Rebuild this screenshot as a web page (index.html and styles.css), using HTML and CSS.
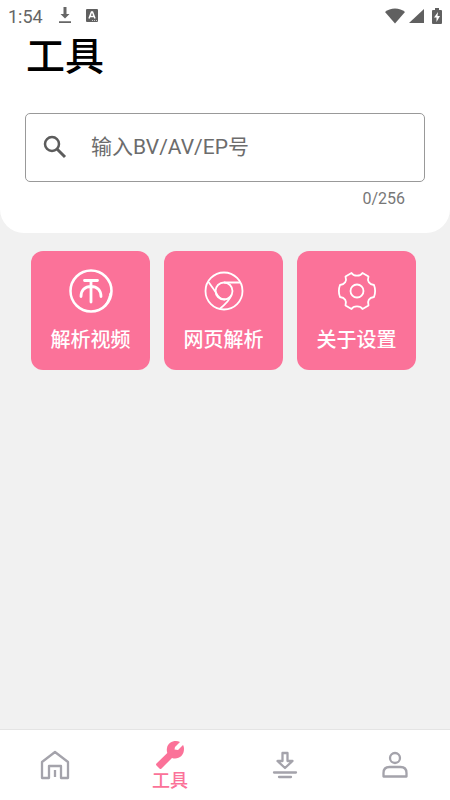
FILE: index.html
```html
<!DOCTYPE html>
<html lang="zh-CN">
<head>
<meta charset="utf-8">
<meta name="viewport" content="width=device-width, initial-scale=1">
<title>工具</title>
<link rel="stylesheet" href="styles.css">
</head>
<body>
<header class="top">
  <div class="status">
    <span class="time">1:54</span>
    <svg class="status-download" width="14" height="18" viewBox="0 0 14 18" aria-hidden="true"><path d="M5.500 0h3v7h3L7 11.500 2.500 7h3zM1 14.300h12v1.700H1z" fill="#666"/></svg>
    <svg class="status-app" width="12" height="14" viewBox="0 0 12 14" aria-hidden="true"><rect width="12" height="13" rx="1" fill="#606060"/><path d="M3 9.500 5.500 3h1L9 9.500M4 7.500h4" fill="none" stroke="#fff" stroke-width="1.500"/><path d="M6 11.500h5" stroke="#ccc" stroke-dasharray="1 1"/></svg>
    <span class="spacer"></span>
    <svg width="20" height="16" viewBox="0 0 20 16" aria-hidden="true"><path d="M0 4C5-.7 15-.7 20 4L10 15.500z" fill="#606060"/></svg>
    <svg width="15" height="15" viewBox="0 0 15 15" aria-hidden="true"><path d="M15 0v14H0z" fill="#606060"/></svg>
    <svg class="battery" width="10" height="17" viewBox="0 0 10 17" aria-hidden="true"><path d="M3 0h4v2h2q1 0 1 1v12q0 1-1 1H1q-1 0-1-1V3q0-1 1-1h2z" fill="#606060"/><path d="M6 4 2 9.500h2.500V14L8 8H5.500z" fill="#fff"/></svg>
  </div>
  <h1>工具</h1>
  <label class="search">
    <svg width="24" height="24" viewBox="0 0 24 24" aria-hidden="true"><circle cx="9" cy="9" r="7" fill="none" stroke="#5c5c5c" stroke-width="2.500"/><path d="m14 14 8 8" stroke="#5c5c5c" stroke-width="3"/></svg>
    <input type="text" maxlength="256" placeholder="输入BV/AV/EP号" aria-label="输入BV/AV/EP号">
  </label>
  <div class="counter">0/256</div>
</header>
<main class="cards">
  <button class="card" type="button">
    <svg width="46" height="46" viewBox="0 0 46 46" fill="none" stroke="#fff" aria-hidden="true"><circle cx="23" cy="23" r="20.500" stroke-width="2.500"/><path d="M43.500 23C42.500 30 39 36 34 40c4-4 6.500-8 8-15z" fill="#fff" stroke-width="1"/><path d="M16.500 12.500h13M23 12.500V34M13 28.500c0-6.500 4-10 10-10s10 3.500 10 10" stroke-width="2.800" stroke-linecap="round"/></svg>
    <span>解析视频</span>
  </button>
  <button class="card" type="button">
    <svg width="46" height="46" viewBox="0 0 46 46" fill="none" stroke="#fff" stroke-width="1.800" aria-hidden="true"><circle cx="23" cy="23" r="18.500"/><circle cx="23" cy="23" r="8.500"/><path d="M23 14.500h16.500M7.500 14 15 24.500c2 4.500 5 7 9 7M30.500 27c-2 6-7 10-12 14"/></svg>
    <span>网页解析</span>
  </button>
  <button class="card" type="button">
    <svg width="46" height="46" viewBox="0 0 46 46" fill="none" stroke="#fff" stroke-width="1.800" stroke-linejoin="round" aria-hidden="true"><circle cx="23" cy="23" r="6.500"/><path d="M17.500 5c2 3.500 9 3.500 11 0l6 3.500c-1.500 4.500.500 8 5.500 8.500 1.500 4 1.500 8 0 12-5 .5-7 4-5.500 8.500l-6 3.500c-2-3.500-9-3.500-11 0l-6-3.500c1.500-4.500-.5-8-5.500-8.500-1.500-4-1.500-8 0-12 5-.5 7-4 5.500-8.500z"/></svg>
    <span>关于设置</span>
  </button>
</main>
<nav class="tabs">
  <a href="#home" aria-label="首页">
    <svg width="30" height="30" viewBox="0 0 30 30" fill="none" stroke="#a4a3ab" stroke-width="2.300" stroke-linejoin="round" aria-hidden="true"><path d="M2 12 15 2l13 10v16h-7V16H9v12H2zM15 20v7"/></svg>
  </a>
  <a class="active" href="#tools" aria-current="page">
    <svg width="30" height="30" viewBox="0 0 30 30" fill="#fb7299" aria-hidden="true"><path d="M25 2C20-.3 13 2 12 8c-.4 2-.2 3.500.3 5L1.500 23.500q-1 1 0 2l3 3q1 1 2 0L17 18c6 2 12-2 12-9 0-2-.4-3-1-4l-5 5-3.500-.5L20 7z"/></svg>
    <span>工具</span>
  </a>
  <a href="#downloads" aria-label="下载">
    <svg width="30" height="30" viewBox="0 0 30 30" fill="none" stroke="#a4a3ab" stroke-width="2.300" stroke-linejoin="round" stroke-linecap="round" aria-hidden="true"><path d="M12.500 3h5v8h5L15 18l-7.500-7h5zM4 22.500h22M9 27h12"/></svg>
  </a>
  <a href="#profile" aria-label="我的">
    <svg width="30" height="30" viewBox="0 0 30 30" fill="none" stroke="#a4a3ab" stroke-width="2.300" stroke-linejoin="round" aria-hidden="true"><circle cx="15" cy="8" r="5"/><path d="M3.500 26.500V23c0-4 2-6 6-6h11c4 0 6 2 6 6v3.500z"/></svg>
  </a>
</nav>
</body>
</html>
```
FILE: styles.css
```css
* {
  box-sizing: border-box;
}

body {
  margin: 0;
  min-height: 100vh;
  display: flex;
  flex-direction: column;
  background: #f1f1f1;
  font-family: Roboto, "Noto Sans CJK SC", sans-serif;
}

.top {
  background: #fff;
  border-radius: 0 0 24px 24px;
  padding: 0 25px 24px;
}

.status {
  display: flex;
  align-items: center;
  gap: 4px;
  height: 32px;
  margin: 0 -17px;
  color: #666;
  font-size: 18px;
}

.status-download {
  margin-left: 11px;
}

.status-app {
  margin-left: 10px;
}

.spacer {
  flex: 1;
}

.battery {
  margin-left: 4px;
}

h1 {
  margin: 1px 0 32px;
  padding-left: 1px;
  font-size: 39px;
  line-height: 48px;
  font-weight: 500;
  color: #000;
}

.search {
  display: flex;
  align-items: center;
  gap: 24px;
  height: 69px;
  padding: 0 17px 2px;
  border: 1px solid #999;
  border-radius: 5px;
}

.search input {
  flex: 1;
  min-width: 0;
  padding: 0;
  border: 0;
  outline: 0;
  background: none;
  font-family: Roboto, "Noto Sans CJK SC", sans-serif;
  font-size: 21px;
  color: #333;
}

.search input::placeholder {
  color: #6c6c6c;
  opacity: 1;
}

.counter {
  margin-top: 7px;
  padding-right: 20px;
  text-align: right;
  font-size: 16px;
  line-height: 20px;
  color: #777;
}

.cards {
  display: grid;
  grid-template-columns: repeat(3, 1fr);
  gap: 14px;
  padding: 18px 34px 18px 31px;
}

.card {
  display: flex;
  flex-direction: column;
  align-items: center;
  gap: 11px;
  aspect-ratio: 1;
  padding: 17px 0 0;
  border: 0;
  border-radius: 12px;
  background: #fb7299;
  color: #fff;
  font: 500 20px/28px "Noto Sans CJK SC", sans-serif;
}

.tabs {
  display: flex;
  height: 71px;
  margin-top: auto;
  border-top: 1px solid #e4e4e4;
  background: #fff;
}

.tabs a {
  flex: 11;
  display: flex;
  flex-direction: column;
  align-items: center;
  justify-content: center;
  color: #fb7299;
  text-decoration: none;
}

.tabs .active {
  flex: 12;
  padding-top: 2px;
  font-size: 18px;
  line-height: 22px;
  font-weight: 500;
}
```
